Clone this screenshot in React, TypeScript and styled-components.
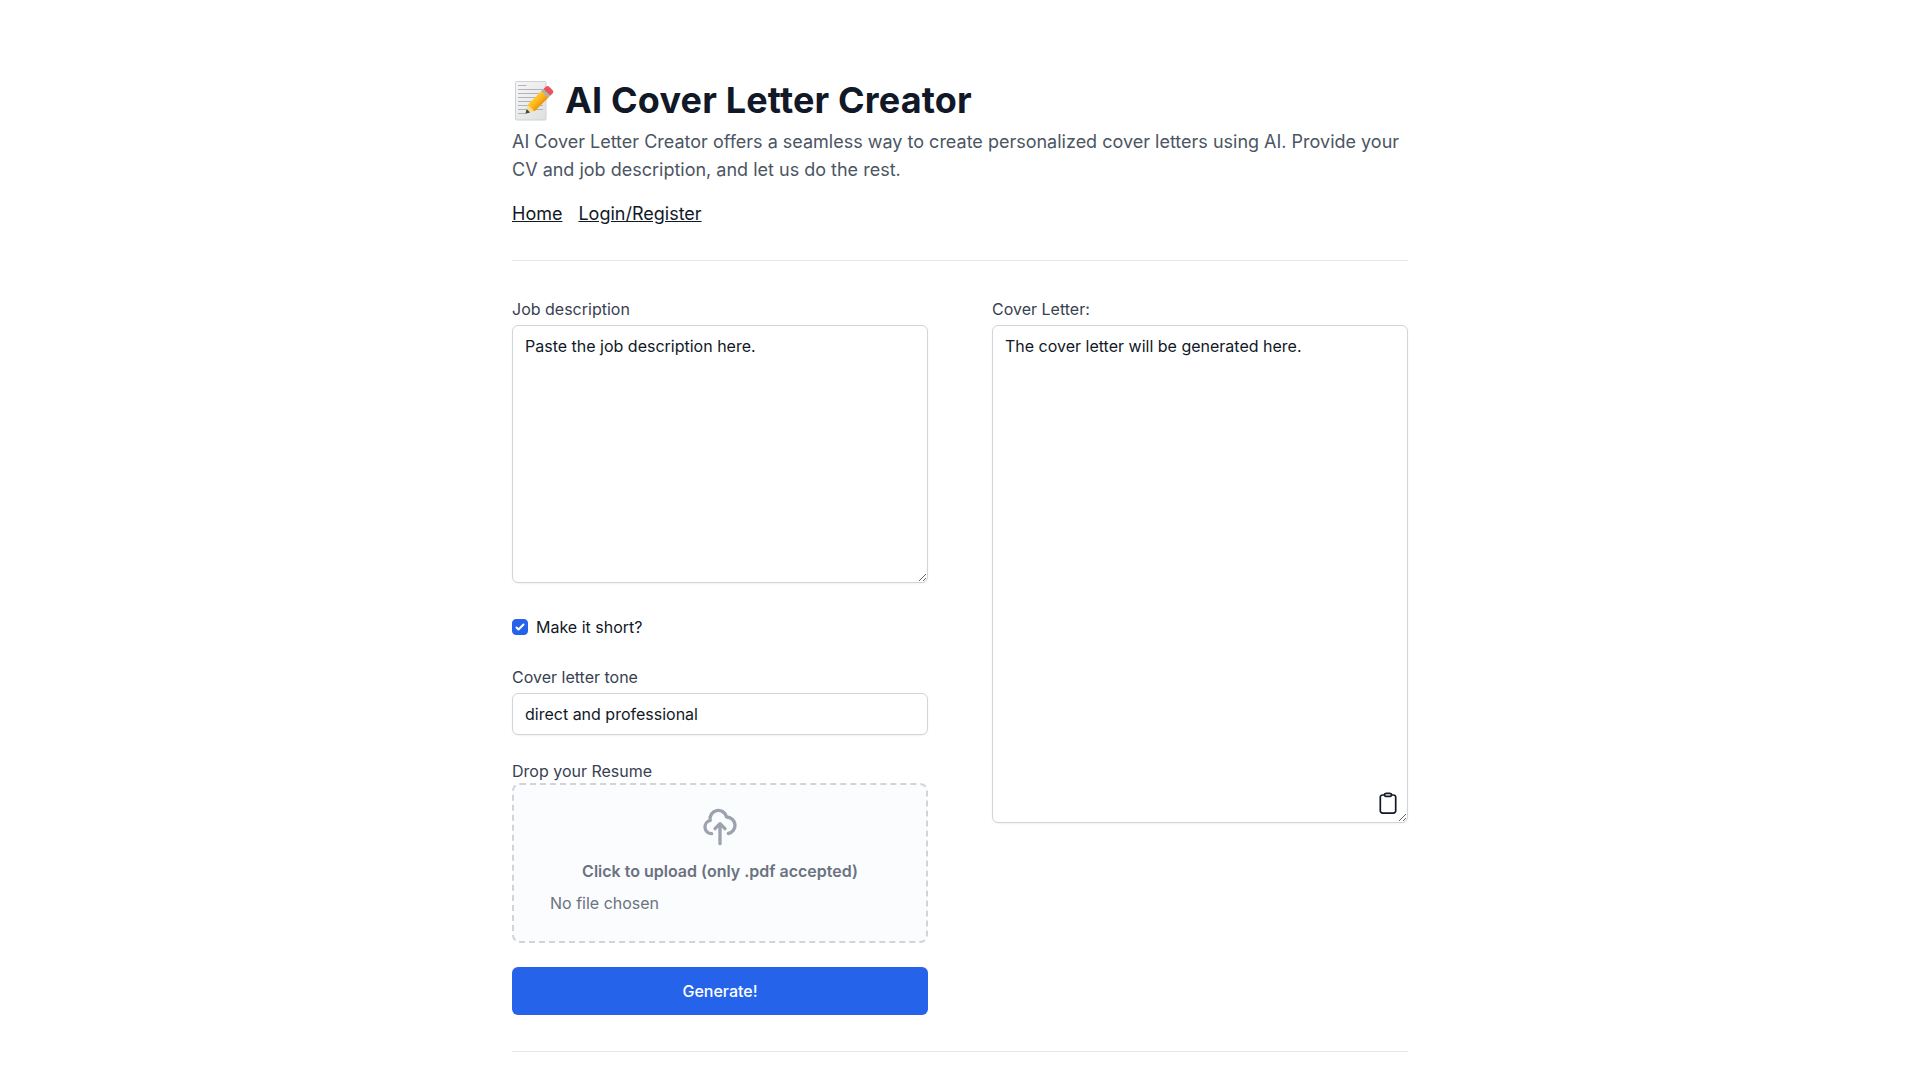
import React, { useState } from "react";
import styled, { createGlobalStyle } from "styled-components";

const GlobalStyle = createGlobalStyle`
  *, *::before, *::after { box-sizing: border-box; }
  body {
    margin: 0;
    background: #fff;
    color: #111827;
    font-family: Inter, "Liberation Sans", sans-serif;
    font-size: 16px;
    line-height: 24px;
  }
  html { overflow: hidden; }
`;

const Page = styled.main`
  width: 896px;
  margin: 0 auto;
  padding-top: 80px;
`;

const Header = styled.header`
  display: flex;
  flex-direction: column;
  height: 181px;
  border-bottom: 1px solid #e5e7eb;
`;

const Title = styled.h1`
  display: flex;
  align-items: center;
  gap: 9px;
  height: 40px;
  margin: 0 0 8px;
  font-size: 36px;
  line-height: 40px;
  font-weight: 700;
  letter-spacing: 0.17px;
  white-space: nowrap;
`;

const Lead = styled.p`
  margin: 0;
  color: #4b5563;
  font-size: 18px;
  line-height: 28px;
`;

const Nav = styled.nav`
  display: flex;
  gap: 16px;
  margin-top: 16px;
`;

const NavLink = styled.a`
  color: #111827;
  font-size: 18px;
  line-height: 28px;
  text-decoration: underline;
`;

const Columns = styled.div`
  display: grid;
  grid-template-columns: 1fr 1fr;
  gap: 64px;
  padding: 36px 0;
  border-bottom: 1px solid #e5e7eb;
`;

const Column = styled.div`
  display: flex;
  flex-direction: column;
`;

const Label = styled.label<{ $gap?: number }>`
  color: #374151;
  margin-bottom: ${(p) => p.$gap ?? 4}px;
`;

const TextArea = styled.textarea`
  display: block;
  width: 100%;
  margin: 0;
  padding: 8px 12px;
  border: 1px solid #d1d5db;
  border-radius: 6px;
  background: #fff;
  color: #111827;
  font: inherit;
  box-shadow: 0 1px 2px rgba(0, 0, 0, 0.05);
  outline: none;
  overflow: auto;
  resize: both;
`;

const OutputBox = styled.div`
  position: relative;
`;

const CopyButton = styled.button`
  position: absolute;
  right: 8px;
  bottom: 8px;
  width: 24px;
  height: 24px;
  padding: 0;
  border: 0;
  background: none;
  color: #111827;
`;

const CheckRow = styled.label`
  display: flex;
  align-items: center;
  gap: 8px;
  margin: 32px 0 26px;
`;

const Checkbox = styled.input`
  appearance: none;
  width: 16px;
  height: 16px;
  margin: 0;
  border: 1px solid #2563eb;
  border-radius: 4px;
  background: #fff;
  &:checked { background: #2563eb; }
`;

const CheckBoxWrap = styled.span`
  display: grid;
  width: 16px;
  height: 16px;
  > * { grid-area: 1 / 1; }
  > svg { pointer-events: none; }
`;

const TextInput = styled.input`
  height: 42px;
  padding: 8px 12px;
  border: 1px solid #d1d5db;
  border-radius: 6px;
  color: #111827;
  font: inherit;
  box-shadow: 0 1px 2px rgba(0, 0, 0, 0.05);
  outline: none;
  margin-bottom: 24px;
`;

const DropZone = styled.div`
  display: flex;
  flex-direction: column;
  align-items: center;
  height: 160px;
  padding-top: 22px;
  border: 2px dashed #d1d5db;
  border-radius: 8px;
  background: #fafcfe;
  color: #6b7280;
`;

const UploadText = styled.p`
  margin: 12px 0 8px;
  font-weight: 600;
`;

const FileName = styled.span`
  align-self: stretch;
  padding-left: 36px;
`;

const SubmitButton = styled.button`
  height: 48px;
  margin-top: 24px;
  border: 0;
  border-radius: 6px;
  background: #2563eb;
  color: #fff;
  font: inherit;
  font-weight: 500;
`;

const MemoIcon = () => (
  <svg width="44" height="42" viewBox="0 0 44 42" aria-hidden="true">
    <defs>
      <linearGradient id="paper" x1="0" y1="0" x2="1" y2="1">
        <stop offset="0" stopColor="#f7f7f7" />
        <stop offset="1" stopColor="#dedfe0" />
      </linearGradient>
      <linearGradient id="pencil" x1="0" y1="0" x2="0" y2="1">
        <stop offset="0" stopColor="#ffca28" />
        <stop offset="0.5" stopColor="#fbb51c" />
        <stop offset="1" stopColor="#ef9208" />
      </linearGradient>
    </defs>
    <rect x="3.5" y="2.5" width="30.5" height="38.5" rx="1" fill="url(#paper)" stroke="#cfd1d2" />
    <path d="M6 6.5h8.5M6 10.5h25M6 14.5h25M6 18.5h25M6 22.5h25M6 26.5h25M6 30.5h25M6 34.5h8" stroke="#aeb4b8" strokeWidth="1" />
    <g transform="translate(13.4 34.8) rotate(-45) scale(0.96)">
      <path d="M0 0 9-5V5Z" fill="#fbdc8e" />
      <path d="M0 0 4.4-2.5V2.5Z" fill="#37474f" />
      <path d="M9-5H29V5H9Q7 3.2 9 1.6 7 0 9-1.6 7-3.2 9-5Z" fill="url(#pencil)" />
      <rect x="28.5" y="-5" width="3" height="10" fill="#aab0b3" />
      <path d="M31.5-5H35Q37.5-5 37.5-2V2Q37.5 5 35 5H31.5Z" fill="#e9545a" />
    </g>
  </svg>
);

const UploadIcon = () => (
  <svg width="40" height="40" viewBox="0 0 24 24" fill="none" stroke="#9ca3af" strokeWidth="2" strokeLinecap="round" strokeLinejoin="round">
    <path d="M7 16a4 4 0 01-.88-7.903A5 5 0 1115.9 6L16 6a5 5 0 011 9.9M15 13l-3-3m0 0l-3 3m3-3v12" />
  </svg>
);

const ClipboardIcon = () => (
  <svg width="24" height="24" viewBox="0 0 24 24" fill="none" stroke="currentColor" strokeWidth="1.7" strokeLinejoin="round">
    <path d="M8.5 4H6.6A2.3 2.3 0 0 0 4.3 6.3V19.8a2.3 2.3 0 0 0 2.3 2.3H17.4a2.3 2.3 0 0 0 2.3-2.3V6.3A2.3 2.3 0 0 0 17.4 4h-1.9" />
    <path d="M10.4 2.3h3.2a1.9 1.5 0 0 1 1.9 1.5v.3a1.2 1.2 0 0 1-1.2 1.2H9.7a1.2 1.2 0 0 1-1.2-1.2v-.3a1.9 1.5 0 0 1 1.9-1.5z" />
  </svg>
);

export default function App() {
  const [short, setShort] = useState(true);
  return (
    <>
      <GlobalStyle />
      <Page>
        <Header>
          <Title><MemoIcon />AI Cover Letter Creator</Title>
          <Lead>
            AI Cover Letter Creator offers a seamless way to create personalized cover letters using AI. Provide your CV and job description, and let us do the rest.
          </Lead>
          <Nav>
            <NavLink href="#">Home</NavLink>
            <NavLink href="#">Login/Register</NavLink>
          </Nav>
        </Header>
        <Columns>
          <Column>
            <Label htmlFor="job">Job description</Label>
            <TextArea id="job" rows={10} spellCheck={false} defaultValue="Paste the job description here." />
            <CheckRow>
              <CheckBoxWrap>
                <Checkbox type="checkbox" checked={short} onChange={(e) => setShort(e.target.checked)} />
                <svg width="16" height="16" viewBox="0 0 16 16" fill="#fff">
                  <path d="M12.207 4.793a1 1 0 010 1.414l-5 5a1 1 0 01-1.414 0l-2-2a1 1 0 011.414-1.414L6.5 9.086l4.293-4.293a1 1 0 011.414 0z" />
                </svg>
              </CheckBoxWrap>
              Make it short?
            </CheckRow>
            <Label htmlFor="tone">Cover letter tone</Label>
            <TextInput id="tone" spellCheck={false} defaultValue="direct and professional" />
            <Label as="span" $gap={0}>Drop your Resume</Label>
            <DropZone>
              <UploadIcon />
              <UploadText>Click to upload (only .pdf accepted)</UploadText>
              <FileName>No file chosen</FileName>
            </DropZone>
            <SubmitButton>Generate!</SubmitButton>
          </Column>
          <Column>
            <Label htmlFor="letter">Cover Letter:</Label>
            <OutputBox>
              <TextArea id="letter" rows={20} spellCheck={false} defaultValue="The cover letter will be generated here." />
              <CopyButton aria-label="Copy"><ClipboardIcon /></CopyButton>
            </OutputBox>
          </Column>
        </Columns>
      </Page>
    </>
  );
}
